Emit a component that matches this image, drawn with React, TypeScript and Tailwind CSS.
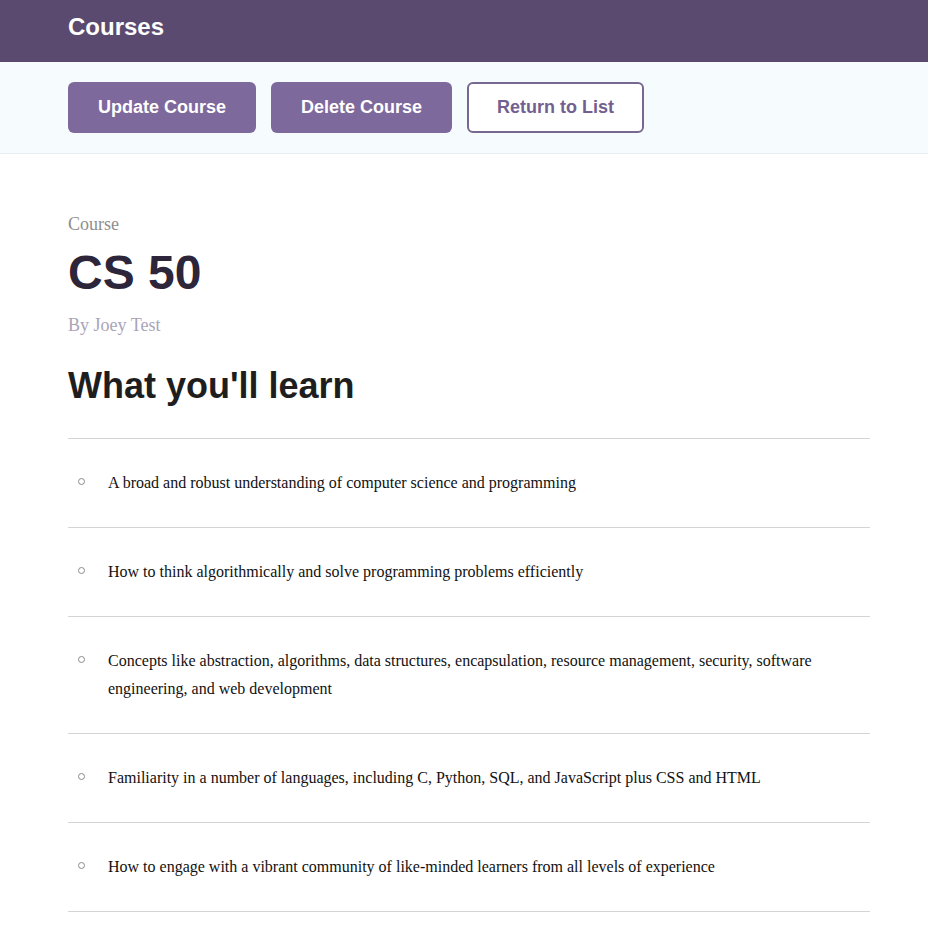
import React from "react";

const items = [
  "A broad and robust understanding of computer science and programming",
  "How to think algorithmically and solve programming problems efficiently",
  "Concepts like abstraction, algorithms, data structures, encapsulation, resource management, security, software engineering, and web development",
  "Familiarity in a number of languages, including C, Python, SQL, and JavaScript plus CSS and HTML",
  "How to engage with a vibrant community of like-minded learners from all levels of experience",
];

export default function App() {
  return (
    <div className="min-h-[928px] bg-white" style={{ fontFamily: '"Liberation Sans", Arial, sans-serif' }}>
      <header className="h-[62px] bg-[#5b4a6f] px-[68px] pt-[12px]">
        <h1 className="text-[24px] font-bold leading-[30px] text-white">Courses</h1>
      </header>
      <div className="flex gap-[15px] border-b border-[#e6eef2] bg-[#f6fbfe] px-[68px] pb-[20px] pt-[20px]">
        <button className="h-[51px] w-[188px] rounded-[6px] bg-[#7e699c] text-[18px] font-bold text-white">Update Course</button>
        <button className="h-[51px] w-[181px] rounded-[6px] bg-[#7e699c] text-[18px] font-bold text-white">Delete Course</button>
        <button className="h-[51px] w-[177px] rounded-[6px] border-2 border-[#776890] bg-white text-[18px] font-bold text-[#735f8f]">Return to List</button>
      </div>
      <main className="px-[68px] pt-[58px]">
        <div className="w-[802px]">
          <p className="text-[18px] leading-[24px] text-[#8e8e8e]" style={{ fontFamily: '"Liberation Serif", "Times New Roman", serif' }}>Course</p>
          <h2 className="mt-[13px] text-[48px] font-bold leading-[48px] text-[#2d2539]">CS 50</h2>
          <p className="mt-[16px] text-[18px] leading-[24px] text-[#aaa4b8]" style={{ fontFamily: '"Liberation Serif", "Times New Roman", serif' }}>By Joey Test</p>
          <h3 className="mt-[29px] text-[36px] font-bold leading-[40px] text-[#1e1e1e]">What you'll learn</h3>
          <ul className="mt-[32px] border-t border-[#d4d4d4]" style={{ fontFamily: '"Liberation Serif", "Times New Roman", serif' }}>
            {items.map((t) => (
              <li key={t} className="flex border-b border-[#d4d4d4] py-[30px] text-[16px] leading-[28px] text-[#111]">
                <span className="flex w-[40px] shrink-0 pl-[10px] pt-[9px]">
                  <span className="block h-[7px] w-[7px] rounded-full border border-[#8a8a8a]" />
                </span>
                <span className="pr-[40px]">{t}</span>
              </li>
            ))}
          </ul>
        </div>
      </main>
    </div>
  );
}
